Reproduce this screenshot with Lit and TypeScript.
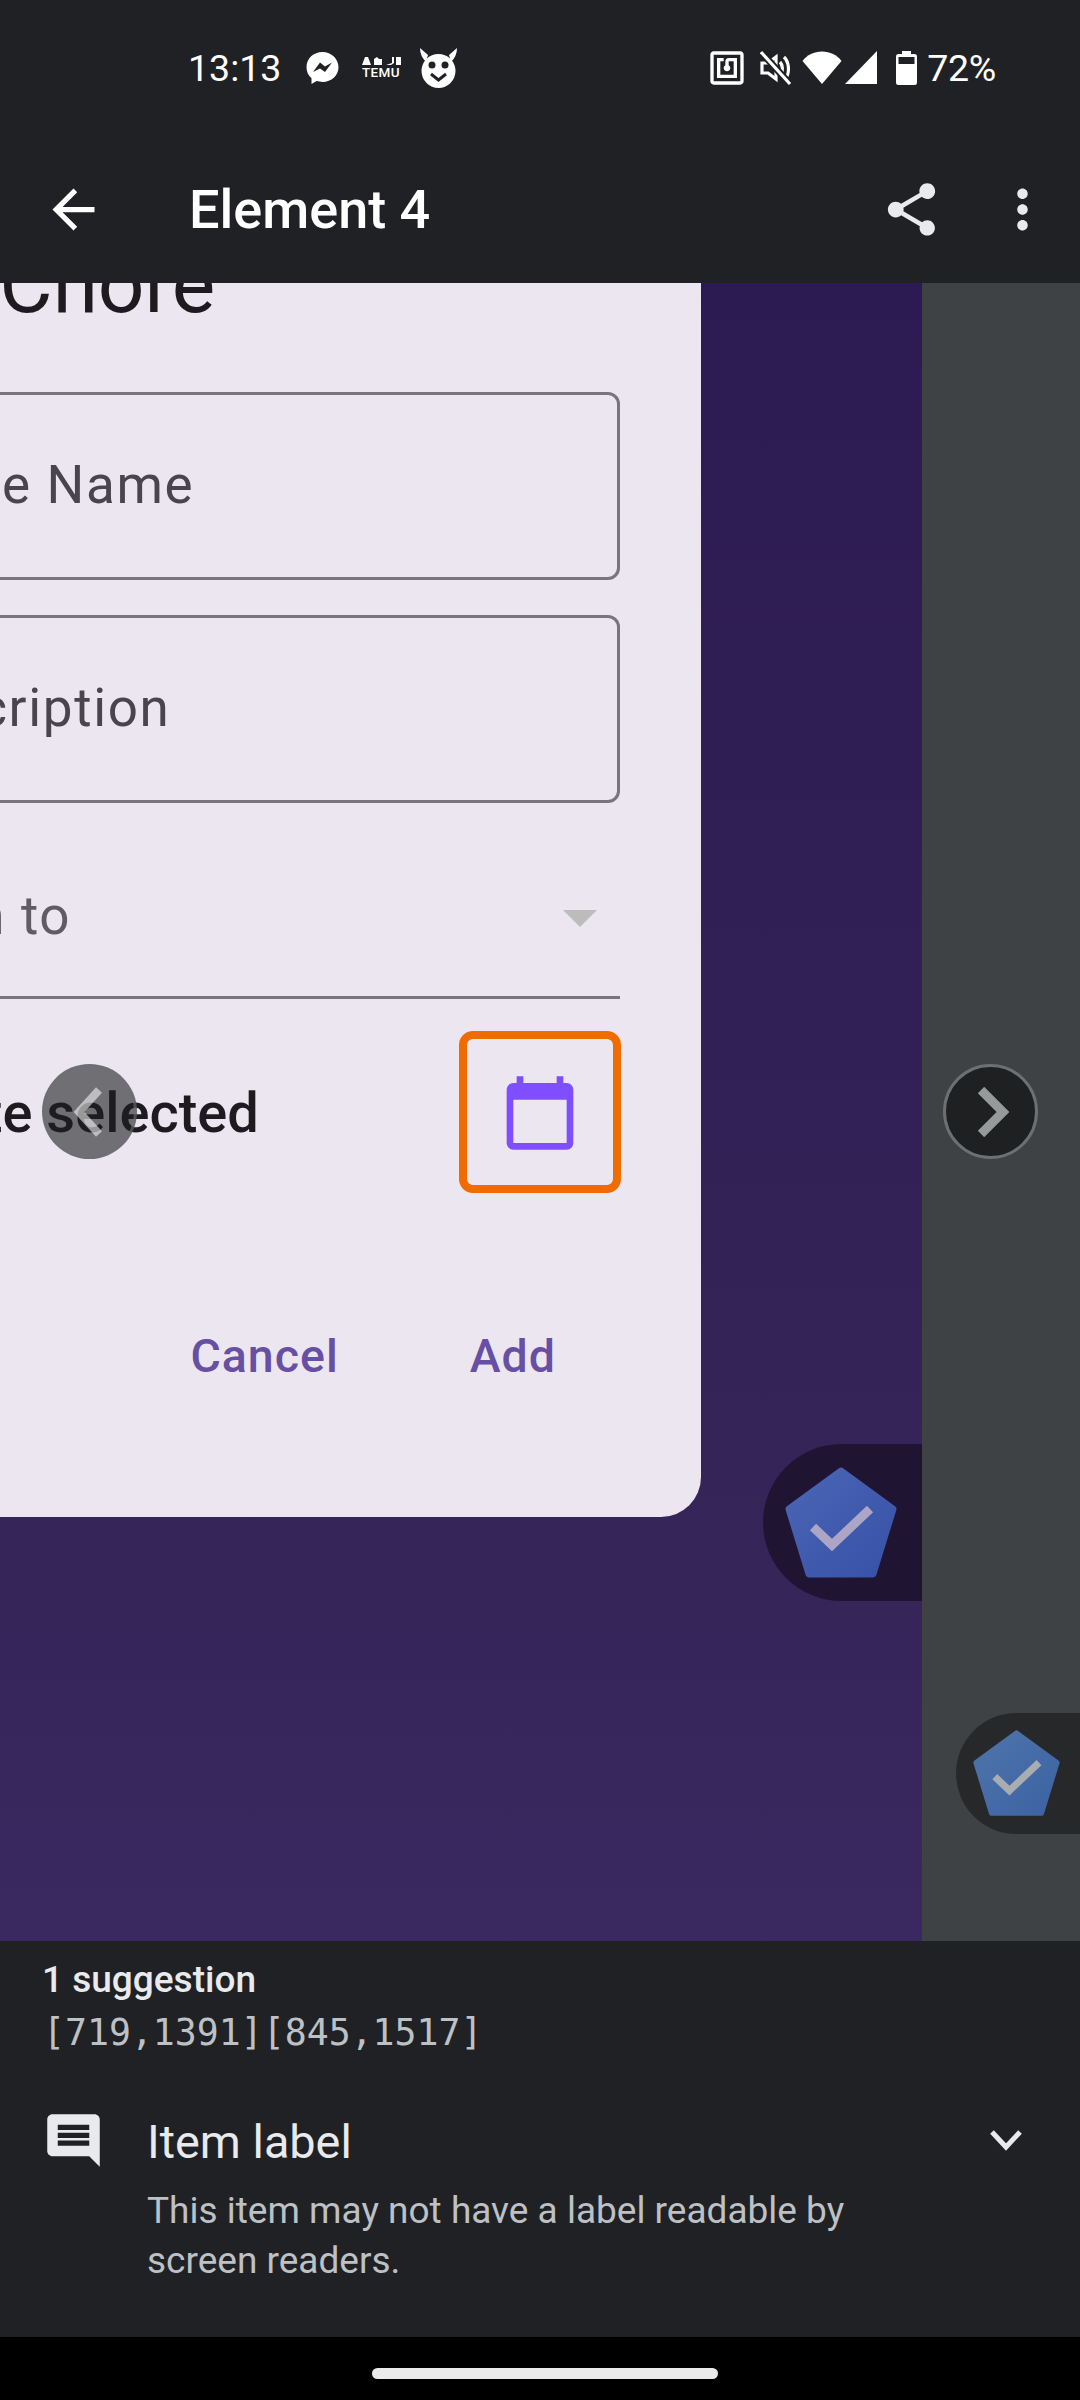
import { LitElement, html, css } from "lit";
import { customElement } from "lit/decorators.js";

const pentagon = (fill: string, check: string, id: string) => html`
  <svg class="pent" viewBox="0 0 112 112">
    <defs><linearGradient id=${id} x1="0" y1="0" x2="1" y2="1">
      <stop offset="0" stop-color=${fill.split("|")[0]}/><stop offset="1" stop-color=${fill.split("|")[1]}/>
    </linearGradient></defs>
    <path d="M56 4 L108 42 L88 107 L24 107 L4 42 Z" fill="url(#${id})" stroke="url(#${id})" stroke-width="7" stroke-linejoin="round"/>
    <path d="M28 60 L47 78 L85 42" fill="none" stroke=${check} stroke-width="9"/>
  </svg>`;

@customElement("app-root")
export class AppRoot extends LitElement {
  static styles = css`
    :host { display: block; width: 1080px; height: 2400px; overflow: hidden; background: #000; font-family: Roboto, "Liberation Sans", sans-serif; }
    .page { display: flex; flex-direction: column; height: 2400px; }
    .status { height: 135px; background: #202124; display: flex; align-items: center; color: #fff; flex: none; }
    .status svg { display: block; flex: none; }
    .time { font-size: 37.5px; margin-left: 188px; width: 118px; line-height: 44px; }
    .temu { display: flex; flex-direction: column; align-items: center; width: 40px; margin-left: 22px; margin-right: 18px; }
    .temu span { font-size: 13.5px; font-weight: 500; line-height: 13px; letter-spacing: .4px; }
    .rightgroup { margin-left: auto; display: flex; align-items: center; padding-right: 84px; }
    .pct { font-size: 37.5px; line-height: 44px; margin-left: 10px; letter-spacing: -.3px; }
    .toolbar { height: 148px; background: #202124; display: flex; align-items: center; padding: 0 26px 0 42px; flex: none; color: #fff; }
    .toolbar .ttl { font-size: 54px; font-weight: 500; margin-left: 84px; flex: 1; line-height: 60px; padding-top: 2px; }
    .toolbar svg { display: block; flex: none; }
    .toolbar .share { margin-right: 48px; }
    .preview { position: relative; height: 1658px; display: flex; overflow: hidden; flex: none; }
    .purple { width: 922px; background: linear-gradient(#2c1a52 0%, #352457 73%, #3a2860 100%); flex: none; }
    .grey { flex: 1; background: #3e4244; }
    .card { width: 701px; height: 1234px; background: #ece6f0; border-bottom-right-radius: 40px; overflow: hidden; }
    .form { width: 785px; margin-left: -165px; display: flex; flex-direction: column; }
    .title { font-size: 82px; line-height: 100px; margin-top: -49px; margin-bottom: 58px; margin-left: -2px; color: #1d1b20; white-space: nowrap; }
    .field { height: 188px; box-sizing: border-box; border: 3px solid #79747e; border-radius: 12px; display: flex; align-items: center; padding: 0 0 3px 46px; font-size: 53px; letter-spacing: 1.65px; color: #49454f; margin-bottom: 35px; white-space: nowrap; }
    .select { height: 161px; box-sizing: border-box; border-bottom: 3px solid #79747e; display: flex; align-items: center; justify-content: space-between; font-size: 53px; letter-spacing: 1.65px; color: #5f5c64; padding: 0 23px 3px 0; white-space: nowrap; }
    .arrow { width: 0; height: 0; border-left: 17px solid transparent; border-right: 17px solid transparent; border-top: 17px solid #bcbcbc; margin-top: 6px; }
    .date { height: 168px; margin-top: 30px; display: flex; align-items: center; justify-content: space-between; padding-right: 40px; font-size: 56px; font-weight: 500; color: #1d1b20; white-space: nowrap; }
    .date span { margin-left: -105px; }
    .date svg { display: block; flex: none; }
    .actions { display: flex; justify-content: flex-end; gap: 131px; padding-right: 64px; margin-top: 129px; font-size: 46.5px; font-weight: 500; letter-spacing: 1px; color: #6750a4; line-height: 60px; }
    .pill { position: absolute; border-radius: 80px 0 0 80px; display: flex; align-items: center; box-sizing: border-box; }
    .pill.a { left: 763px; top: 1161px; width: 159px; height: 157px; background: #201433; padding-left: 22px; }
    .pill.a .pent { width: 112px; height: 112px; }
    .pill.b { left: 956px; top: 1430px; width: 124px; height: 121px; background: #272829; padding-left: 17px; }
    .pill.b .pent { width: 87px; height: 87px; }
    .nav-btn { position: absolute; top: 781px; width: 95px; height: 95px; box-sizing: border-box; border-radius: 50%; display: flex; align-items: center; justify-content: center; }
    .nav-btn.l { left: 42px; background: rgba(30,32,33,.6); border: 3px solid rgba(108,112,115,.6); }
    .nav-btn.r { left: 943px; background: #1e2021; border: 3px solid #6c7073; }
    .highlight { position: absolute; left: 459px; top: 748px; width: 162px; height: 162px; box-sizing: border-box; border: 8px solid #f06c00; border-radius: 14px; }
    .panel { height: 396px; background: #202124; box-sizing: border-box; padding: 17px 0 0 42px; flex: none; display: flex; flex-direction: column; }
    .sug { font-size: 37px; font-weight: 500; line-height: 44px; color: #e8eaed; }
    .coords { font-family: "DejaVu Sans Mono", "Liberation Mono", monospace; font-size: 36.5px; line-height: 44px; color: #bdc1c6; margin-top: 9px; margin-left: 1px; white-space: nowrap; }
    .row { display: flex; margin-top: 54px; }
    .row svg { display: block; flex: none; }
    .body { margin-left: 42px; width: 740px; padding-top: 3px; }
    .lbl { font-size: 46.8px; line-height: 60px; color: #e8eaed; }
    .desc { font-size: 37px; line-height: 50px; color: #bdc1c6; margin-top: 14px; }
    .chev { margin-left: 102px; margin-top: 20px; }
    .bar { flex: 1; background: #000; display: flex; justify-content: center; align-items: flex-start; padding: 31px 0 0 10px; }
    .handle { width: 346px; height: 11px; border-radius: 6px; background: #ebebeb; }
  `;

  render() {
    return html`<div class="page">
      <div class="status">
        <div class="time">13:13</div>
        <svg width="33" height="34" viewBox="0 0 33 34"><path d="M16.5 1C7.5 1 .5 7.6 .5 16.2c0 4.5 1.9 8.4 5 11.1V33l5.2-2.9c1.8.5 3.8.8 5.8.8 9 0 16-6.6 16-14.700S25.500 1 16.500 1z" fill="#fff"/><path d="M7 21 L14 11.500 L19 15.500 L26 11.500 L19 21 L14 17.500 Z" fill="#202124"/></svg>
        <div class="temu">
          <svg width="40" height="10" viewBox="0 0 40 10" fill="#fff"><path d="M1 9 L4 1h3l3 8zM13 9V3l3-2 2 2h3v6zM25 9l3-1 3-1V1h2v6l-3 2zM35 1h5v8h-5z"/></svg>
          <span>TEMU</span>
        </div>
        <svg width="39" height="40" viewBox="0 0 39 40"><path d="M1 0 L9 7 L7 14 Q1 8 1 0z M38 0 L30 7 L32 14 Q38 8 38 0z" fill="#fff"/><circle cx="19.500" cy="23" r="17" fill="#fff"/><circle cx="13" cy="17" r="3.500" fill="#202124"/><circle cx="26" cy="17" r="3.500" fill="#202124"/><path d="M12 26 L19.500 32 L27 26" fill="none" stroke="#202124" stroke-width="3"/></svg>
        <div class="rightgroup">
          <svg width="40" height="40" viewBox="0 0 24 24" fill="#fff" style="margin-right:13px"><path d="M20 2H4c-1.100 0-2 .9-2 2v16c0 1.100.9 2 2 2h16c1.100 0 2-.9 2-2V4c0-1.100-.9-2-2-2zm0 18H4V4h16v16zM18 6h-5c-1.100 0-2 .9-2 2v2.280c-.6.35-1 .98-1 1.720 0 1.100.9 2 2 2s2-.9 2-2c0-.74-.4-1.380-1-1.720V8h3v8H8V8h2V6H6v12h12V6z"/></svg>
          <svg width="32" height="36" viewBox="0 0 32 36" fill="none" stroke="#fff" stroke-width="3.200" style="margin-right:10px"><path d="M2 13h6l8-6v22l-8-6H2z"/><path d="M20 12c3 3 3 9 1 12M24 7c5 5 6 15 2 21"/><path d="M1 2 L30 34" stroke="#202124" stroke-width="7"/><path d="M1 2 L30 34"/></svg>
          <svg width="40" height="33" viewBox="0 0 40 33" fill="#fff" style="margin-right:3px"><path d="M20 33 L.5 10 C5 4 12 .5 20 .5 S35 4 39.500 10z"/></svg>
          <svg width="32" height="33" viewBox="0 0 32 33" fill="#fff" style="margin-right:19px"><path d="M32 0V33H0z"/></svg>
          <svg width="21" height="34" viewBox="0 0 21 34"><path fill="#fff" fill-rule="evenodd" d="M6 0h9v3h3.500A2.500 2.500 0 0 1 21 5.500v26a2.500 2.500 0 0 1-2.500 2.500H2.500A2.500 2.500 0 0 1 0 31.500v-26A2.500 2.500 0 0 1 2.500 3H6z M2.500 6v7h16V6z"/></svg>
          <div class="pct">72%</div>
        </div>
      </div>

      <div class="toolbar">
        <svg width="63" height="63" viewBox="0 0 24 24" fill="#fff"><path d="M20 11H7.830l5.590-5.590L12 4l-8 8 8 8 1.410-1.410L7.830 13H20v-2z"/></svg>
        <div class="ttl">Element 4</div>
        <svg class="share" width="63" height="63" viewBox="0 0 24 24" fill="#e8eaed"><path d="M18 16.080c-.76 0-1.440.3-1.960.77L8.910 12.700c.05-.23.09-.46.09-.7s-.04-.47-.09-.7l7.050-4.110c.54.5 1.250.81 2.040.81 1.660 0 3-1.340 3-3s-1.340-3-3-3-3 1.340-3 3c0 .24.04.47.09.7L8.040 9.810C7.500 9.310 6.790 9 6 9c-1.660 0-3 1.340-3 3s1.340 3 3 3c.79 0 1.500-.31 2.040-.81l7.120 4.160c-.05.21-.08.43-.08.65 0 1.610 1.310 2.920 2.920 2.920 1.610 0 2.920-1.310 2.920-2.920s-1.310-2.920-2.920-2.920z"/></svg>
        <svg width="63" height="63" viewBox="0 0 24 24" fill="#e8eaed"><path d="M12 8c1.100 0 2-.9 2-2s-.9-2-2-2-2 .9-2 2 .9 2 2 2zm0 2c-1.100 0-2 .9-2 2s.9 2 2 2 2-.9 2-2-.9-2-2-2zm0 6c-1.100 0-2 .9-2 2s.9 2 2 2 2-.9 2-2-.9-2-2-2z"/></svg>
      </div>

      <div class="preview">
        <div class="purple">
          <div class="card">
            <div class="form">
              <div class="title">Add Chore</div>
              <div class="field">Chore Name</div>
              <div class="field">Description</div>
              <div class="select"><span>Assign to</span><div class="arrow"></div></div>
              <div class="date"><span>No due date selected</span>
                <svg width="80" height="80" viewBox="0 0 24 24" fill="#7f4fff"><path d="M20 3h-1V1h-2v2H7V1H5v2H4c-1.100 0-2 .9-2 2v16c0 1.100.9 2 2 2h16c1.100 0 2-.9 2-2V5c0-1.100-.9-2-2-2zm0 18H4V8h16v13z"/></svg>
              </div>
              <div class="actions"><span>Cancel</span><span>Add</span></div>
            </div>
          </div>
        </div>
        <div class="grey"></div>
        <div class="pill a">${pentagon("#4a66b4|#3751a8", "#aca5c6", "pa")}</div>
        <div class="pill b">${pentagon("#4f74ab|#3c62a3", "#a9acb0", "pb")}</div>
        <div class="nav-btn l"><svg width="40" height="50" viewBox="0 0 40 50" fill="none" stroke="rgba(255,255,255,.55)" stroke-width="8"><path d="M29 3 L9 25 L29 47"/></svg></div>
        <div class="nav-btn r"><svg width="40" height="50" viewBox="0 0 40 50" fill="none" stroke="#979a9a" stroke-width="9"><path d="M10 3 L32 25 L10 47"/></svg></div>
        <div class="highlight"></div>
      </div>

      <div class="panel">
        <div class="sug">1 suggestion</div>
        <div class="coords">[719,1391][845,1517]</div>
        <div class="row">
          <svg width="63" height="63" viewBox="0 0 24 24" fill="#e8eaed"><path fill-rule="evenodd" d="M4 2h16c1.100 0 2 .9 2 2v18l-4-4H4c-1.100 0-2-.9-2-2V4c0-1.100.9-2 2-2z M6 6v2h12V6z M6 9v2h12V9z M6 12v2h12v-2z"/></svg>
          <div class="body">
            <div class="lbl">Item label</div>
            <div class="desc">This item may not have a label readable by screen readers.</div>
          </div>
          <svg class="chev" width="34" height="22" viewBox="0 0 34 22" fill="none" stroke="#e8eaed" stroke-width="5"><path d="M3 3 L17 18 L31 3"/></svg>
        </div>
      </div>
      <div class="bar"><div class="handle"></div></div>
    </div>`;
  }
}
